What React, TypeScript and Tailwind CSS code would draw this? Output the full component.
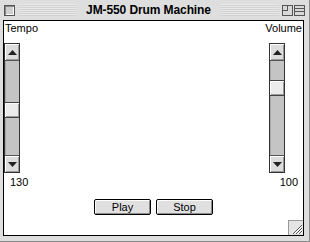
import React from 'react';

const font = { fontFamily: '"Liberation Sans", Arial, sans-serif' };

function Arrow({ up }: { up: boolean }) {
  return (
    <div className="flex h-[16px] w-full items-center justify-center bg-[#dcdcdc] shadow-[inset_1px_1px_0_#fff,inset_-1px_-1px_0_#999]">
      <svg width="9" height="5" viewBox="0 0 9 5">
        {up ? <path d="M4.5 0L9 5H0z" fill="#222" /> : <path d="M0 0h9L4.5 5z" fill="#222" />}
      </svg>
    </div>
  );
}

// vertical platinum scrollbar; thumbTop is px from top of the track
function ScrollBar({ thumbTop }: { thumbTop: number }) {
  return (
    <div className="relative flex h-[130px] w-[16px] flex-col border border-[#333] bg-[#c4c4c4]">
      <div className="border-b border-[#555]">
        <Arrow up />
      </div>
      <div className="relative flex-1 shadow-[inset_1px_0_0_#a8a8a8]">
        <div
          className="absolute left-0 h-[16px] w-[14px] border-y border-[#444] bg-[#ececec] shadow-[inset_1px_1px_0_#fff,inset_-1px_-1px_0_#9a9a9a]"
          style={{ top: thumbTop }}
        />
      </div>
      <div className="border-t border-[#555]">
        <Arrow up={false} />
      </div>
    </div>
  );
}

function PushButton({ label }: { label: string }) {
  return (
    <button
      className="h-[16px] w-[57px] rounded-[2px] border border-black bg-[#e0e0e0] text-[11px] leading-[14px] text-black shadow-[inset_1px_1px_0_#fff,inset_-1px_-1px_0_#8c8c8c]"
      style={font}
    >
      {label}
    </button>
  );
}

export default function App() {
  return (
    <div className="flex h-[242px] w-[310px] flex-col overflow-hidden border-r border-b border-[#8a8a8a] bg-[#dedede]" style={font}>
      {/* title bar */}
      <div className="flex h-[20px] items-center px-[4px]">
        <div className="h-[11px] w-[11px] border border-[#555] bg-[#cfcfcf] shadow-[inset_1px_1px_0_#888,inset_-1px_-1px_0_#fff]" />
        <div className="mx-[3px] h-[12px] flex-1 bg-[repeating-linear-gradient(to_bottom,#e8e8e8_0_1px,#d2d2d2_1px_2px)]" />
        <div className="px-[6px] text-[12px] font-bold leading-[20px] tracking-[-0.1px] text-black">
          JM-550 Drum Machine
        </div>
        <div className="mx-[3px] h-[12px] flex-1 bg-[repeating-linear-gradient(to_bottom,#e8e8e8_0_1px,#d2d2d2_1px_2px)]" />
        <div className="flex gap-[1px]">
          <div className="relative h-[11px] w-[11px] border border-[#555] bg-[#d8d8d8]">
            <div className="absolute left-0 top-0 h-[5px] w-[5px] border-r border-b border-[#555]" />
          </div>
          <div className="flex h-[11px] w-[11px] flex-col justify-center gap-[2px] border border-[#555] bg-[#d8d8d8]">
            <div className="h-px bg-[#555]" />
            <div className="h-px bg-[#555]" />
          </div>
        </div>
      </div>

      {/* content */}
      <div className="mb-[5px] ml-[3px] mr-[5px] flex flex-1 flex-col border border-black bg-white">
        <div className="relative flex flex-1 flex-col">
          <div className="flex justify-between">
            <div className="flex flex-col items-start">
              <div className="h-[14px] pl-[1px] text-[11px] leading-[14px] text-black">Tempo</div>
              <div className="mt-[8px]">
                <ScrollBar thumbTop={41} />
              </div>
              <div className="mt-[2px] pl-[6px] text-[11px] leading-[14px] text-black">130</div>
            </div>
            <div className="flex flex-col items-end">
              <div className="h-[14px] pr-[1px] text-[11px] leading-[14px] text-black">Volume</div>
              <div className="mr-[18px] mt-[8px]">
                <ScrollBar thumbTop={19} />
              </div>
              <div className="mt-[2px] pr-[5px] text-[11px] leading-[14px] text-black">100</div>
            </div>
          </div>

          <div className="mt-[10px] flex justify-center gap-[5px]">
            <PushButton label="Play" />
            <PushButton label="Stop" />
          </div>

          {/* grow box */}
          <div className="absolute bottom-0 right-0 h-[15px] w-[15px] border-l border-t border-[#9a9a9a] bg-[#e4e4e4]">
            <svg width="14" height="14" viewBox="0 0 14 14" className="block">
              <path d="M4 13L13 4M7 13L13 7M10 13L13 10" stroke="#555" strokeWidth="1" />
              <path d="M5 13L13 5M8 13L13 8M11 13L13 11" stroke="#fff" strokeWidth="1" />
            </svg>
          </div>
        </div>
      </div>
    </div>
  );
}
